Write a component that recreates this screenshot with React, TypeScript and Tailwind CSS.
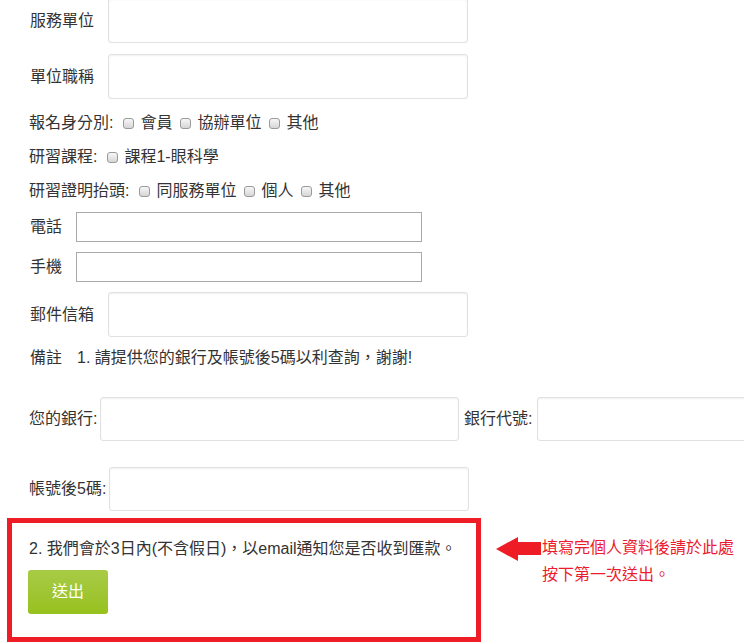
import React from 'react';

const font = { fontFamily: '"Liberation Sans", "Noto Sans CJK TC", sans-serif' };

function Box() {
  return (
    <span className="inline-block w-[11px] h-[11px] shrink-0 rounded-[3px] border border-[#9a9a9a] bg-linear-to-b from-[#f7f7f7] to-[#d6d6d6]" />
  );
}

function BigInput({ w = 'w-[360px]' }: { w?: string }) {
  return (
    <div
      className={`${w} h-full shrink-0 rounded-[3px] border border-[#e1e1e1] bg-white shadow-[inset_0_1px_2px_rgba(0,0,0,0.06)]`}
    />
  );
}

function SmallInput() {
  return <div className="w-[346px] h-full shrink-0 border border-[#a9a9a9] bg-white" />;
}

function CheckRow({ label, items }: { label: string; items: string[] }) {
  return (
    <div className="flex items-center h-[34px] pl-[29px]">
      <span className="mr-[10px] shrink-0">{label}</span>
      {items.map((item) => (
        <span key={item} className="flex items-center shrink-0 mr-[8px]">
          <Box />
          <span className="ml-[6px]">{item}</span>
        </span>
      ))}
    </div>
  );
}

export default function App() {
  return (
    <div className="w-[744px] h-[644px] overflow-hidden bg-white text-[16px] leading-none text-[#333]" style={font}>
      <div className="-mt-[2px]">
        {/* 服務單位 */}
        <div className="flex items-center h-[45px] pl-[30px]">
          <span className="w-[78px] shrink-0">服務單位</span>
          <BigInput />
        </div>

        {/* 單位職稱 */}
        <div className="flex items-center h-[45px] mt-[11px] pl-[30px]">
          <span className="w-[78px] shrink-0">單位職稱</span>
          <BigInput />
        </div>

        <div className="mt-[7px]">
          <CheckRow label="報名身分別:" items={['會員', '協辦單位', '其他']} />
          <CheckRow label="研習課程:" items={['課程1-眼科學']} />
          <CheckRow label="研習證明抬頭:" items={['同服務單位', '個人', '其他']} />
        </div>

        <div className="flex items-center h-[30px] mt-[4px] pl-[30px]">
          <span className="w-[46px] shrink-0">電話</span>
          <SmallInput />
        </div>
        <div className="flex items-center h-[30px] mt-[10px] pl-[30px]">
          <span className="w-[46px] shrink-0">手機</span>
          <SmallInput />
        </div>

        <div className="flex items-center h-[45px] mt-[10px] pl-[30px]">
          <span className="w-[78px] shrink-0">郵件信箱</span>
          <BigInput />
        </div>

        <div className="flex items-center h-[34px] mt-[4px] pl-[30px]">
          <span className="w-[47px] shrink-0">備註</span>
          <span className="whitespace-nowrap">1. 請提供您的銀行及帳號後5碼以利查詢，謝謝!</span>
        </div>

        {/* bank */}
        <div className="flex items-center h-[44px] mt-[22px] pl-[29px]">
          <span className="w-[71px] shrink-0 whitespace-nowrap">您的銀行:</span>
          <BigInput w="w-[359px]" />
          <span className="ml-[5px] w-[73px] shrink-0 whitespace-nowrap">銀行代號:</span>
          <BigInput w="w-[359px]" />
        </div>

        <div className="flex items-center h-[44px] mt-[26px] pl-[29px]">
          <span className="w-[80px] shrink-0 whitespace-nowrap">帳號後5碼:</span>
          <BigInput />
        </div>

        {/* submit area */}
        <div className="flex items-start mt-[7px] ml-[7px]">
          <div className="w-[474px] h-[124px] shrink-0 border-[5px] border-[#ee1c25] pl-[17px] pt-[18px]">
            <p className="leading-[16px] whitespace-nowrap">2. 我們會於3日內(不含假日)，以email通知您是否收到匯款。</p>
            <button
              type="button"
              className="mt-[13px] -ml-[1px] w-[80px] h-[44px] rounded-[3px] bg-linear-to-b from-[#a8cb45] to-[#97c11c] text-white text-[16px]"
            >
              送出
            </button>
          </div>

          <div className="flex items-start ml-[15px] mt-[19px]">
            <svg width="45" height="24" viewBox="0 0 45 24" className="shrink-0">
              <polygon points="0,12 22,0 22,24" fill="#ee1c25" />
              <rect x="21" y="5" width="24" height="13" fill="#ee1c25" />
            </svg>
          </div>

          <div className="ml-[1px] mt-[16px] text-[#ec1b2e] leading-[27px] whitespace-nowrap">
            <div>填寫完個人資料後請於此處</div>
            <div>按下第一次送出。</div>
          </div>
        </div>
      </div>
    </div>
  );
}
